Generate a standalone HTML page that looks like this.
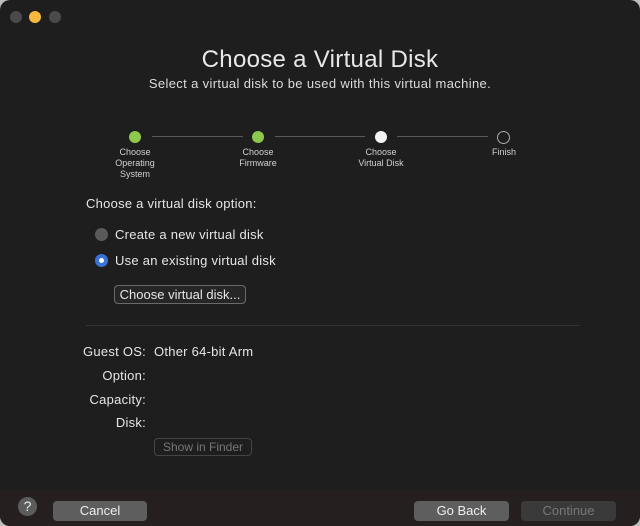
<!DOCTYPE html>
<html><head><style>
body{margin:0;width:640px;height:526px;background:#bdbdbd;font-family:"Liberation Sans",sans-serif;overflow:hidden}
.win{position:absolute;left:0;top:0;width:640px;height:526px;background:#1e1e1e;border-radius:10px;overflow:hidden}
.t{position:absolute;color:#e6e6e6;white-space:nowrap;letter-spacing:0.25px}
.dot{position:absolute;width:12px;height:12px;border-radius:50%}
.line{position:absolute;top:136px;height:1px;background:#5a5a5a}
.lab{position:absolute;top:147px;width:80px;text-align:center;font-size:9px;line-height:11px;color:#d0d0d0}
.btn{position:absolute;border-radius:4px;text-align:center;font-size:13px}
</style></head><body><div class="win">
<div class="dot" style="left:10px;top:11px;background:#4a4a4a"></div>
<div class="dot" style="left:29px;top:11px;background:#f4b93e"></div>
<div class="dot" style="left:49px;top:11px;background:#4a4a4a"></div>
<div class="t" style="left:0;width:640px;text-align:center;top:46px;font-size:24px;color:#e8e8e8;letter-spacing:0.3px">Choose a Virtual Disk</div>
<div class="t" style="left:0;width:640px;text-align:center;top:76px;font-size:13px;color:#dcdcdc;letter-spacing:0.35px">Select a virtual disk to be used with this virtual machine.</div>
<div class="line" style="left:152px;width:91px"></div>
<div class="line" style="left:275px;width:90px"></div>
<div class="line" style="left:397px;width:91px"></div>
<div class="dot" style="left:129px;top:131px;background:#8cc84b"></div>
<div class="dot" style="left:252px;top:131px;background:#8cc84b"></div>
<div class="dot" style="left:375px;top:131px;background:#f2f2f2"></div>
<div class="dot" style="left:497px;top:131px;border:1px solid #aaa;width:11px;height:11px"></div>
<div class="lab" style="left:95px">Choose<br>Operating<br>System</div>
<div class="lab" style="left:218px">Choose<br>Firmware</div>
<div class="lab" style="left:341px">Choose<br>Virtual Disk</div>
<div class="lab" style="left:464px">Finish</div>
<div class="t" style="left:86px;top:196px;font-size:13px">Choose a virtual disk option:</div>
<div class="dot" style="left:95px;top:228px;width:13px;height:13px;background:#5a5a5a"></div>
<div class="t" style="left:115px;top:227px;font-size:13px">Create a new virtual disk</div>
<div class="dot" style="left:95px;top:254px;width:13px;height:13px;background:#3a72d8"></div>
<div class="dot" style="left:99px;top:258px;width:5px;height:5px;background:#fff"></div>
<div class="t" style="left:115px;top:253px;font-size:13px">Use an existing virtual disk</div>
<div class="btn" style="left:114px;top:285px;width:130px;height:17px;line-height:17px;border:1px solid #6a6a6a;background:#262626;color:#e6e6e6">Choose virtual disk...</div>
<div style="position:absolute;left:86px;top:325px;width:494px;height:1px;background:#333"></div>
<div class="t" style="left:40px;width:106px;text-align:right;top:344px;font-size:13px">Guest OS:</div>
<div class="t" style="left:154px;top:344px;font-size:13px">Other 64-bit Arm</div>
<div class="t" style="left:40px;width:106px;text-align:right;top:368px;font-size:13px">Option:</div>
<div class="t" style="left:40px;width:106px;text-align:right;top:392px;font-size:13px">Capacity:</div>
<div class="t" style="left:40px;width:106px;text-align:right;top:415px;font-size:13px">Disk:</div>
<div class="btn" style="left:154px;top:438px;width:96px;height:16px;line-height:16px;border:1px solid #444;color:#777;font-size:12px">Show in Finder</div>
<div style="position:absolute;left:0;top:490px;width:640px;height:36px;background:#261f1f"></div>
<div class="dot" style="left:18px;top:497px;width:19px;height:19px;background:#5c5c5c;color:#eee;font-size:14px;text-align:center;line-height:19px">?</div>
<div class="btn" style="left:53px;top:501px;width:94px;height:20px;line-height:20px;background:#5e5e5e;color:#eee">Cancel</div>
<div class="btn" style="left:414px;top:501px;width:95px;height:20px;line-height:20px;background:#5e5e5e;color:#eee">Go Back</div>
<div class="btn" style="left:521px;top:501px;width:95px;height:20px;line-height:20px;background:#3a3a3a;color:#777">Continue</div>
</div></body></html>
